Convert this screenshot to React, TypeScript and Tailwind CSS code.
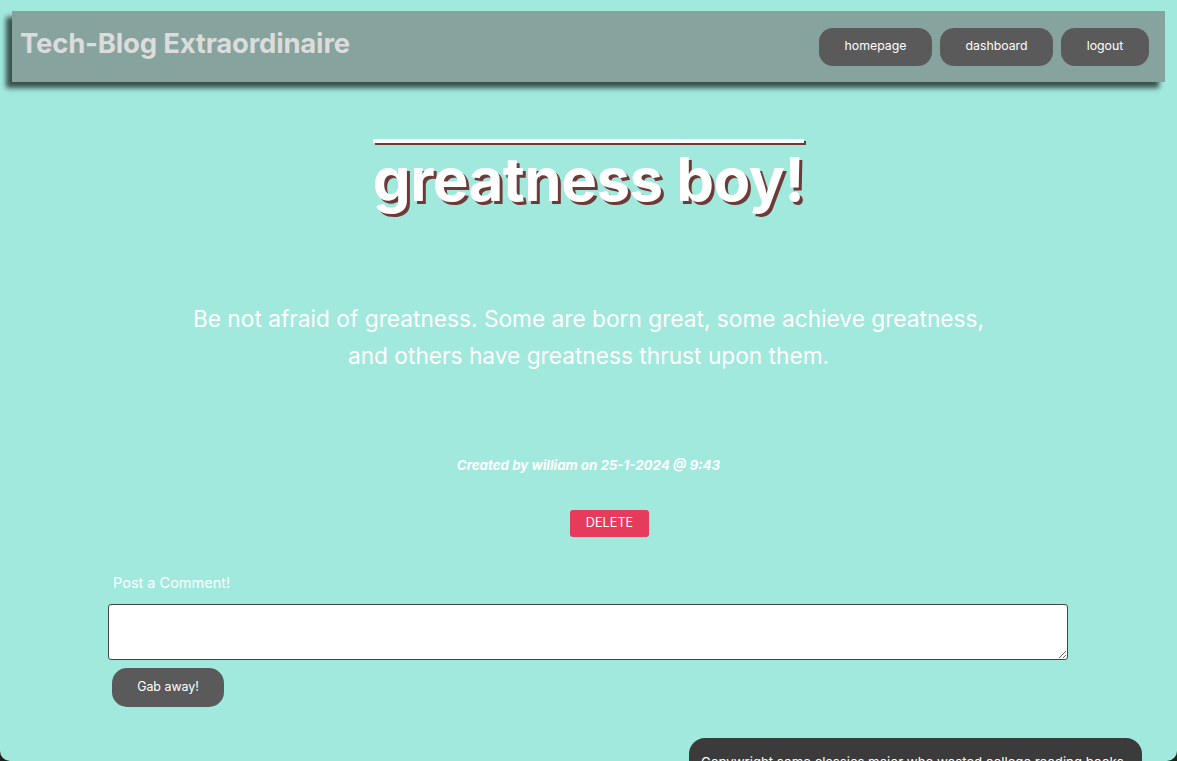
import React from "react";

export default function App() {
  const font = { fontFamily: "Inter, 'Noto Sans', sans-serif" };
  return (
    <div className="h-[761px] w-[1177px] bg-[#202020] overflow-hidden" style={font}>
      <div className="h-full w-full bg-[#a1e8dd] rounded-b-[10px] overflow-hidden flex flex-col">
        {/* Header */}
        <header className="shrink-0 mt-[11px] mx-[12px] h-[71px] bg-[#86a39d] shadow-[-6px_6px_5px_rgba(0,0,0,0.65)] flex items-center justify-between pl-[8px] pr-[16px]">
          <h1 className="text-[27.5px] font-bold text-[#dcdcdc] leading-none -mt-[5px] tracking-[-0.2px]">
            Tech-Blog Extraordinaire
          </h1>
          <nav className="flex gap-[7px]">
            <button className="w-[113px] h-[38px] rounded-[14px] bg-[#5a5a5a] text-white text-[12.3px]">homepage</button>
            <button className="w-[113px] h-[38px] rounded-[14px] bg-[#5a5a5a] text-white text-[12.3px] ml-[1px]">dashboard</button>
            <button className="w-[88px] h-[38px] rounded-[14px] bg-[#5a5a5a] text-white text-[12.3px] ml-[1px]">logout</button>
          </nav>
        </header>

        {/* Post */}
        <main className="shrink-0 flex flex-col items-center">
          <div className="mt-[57px] inline-flex flex-col">
            <div className="h-[4px] bg-white shadow-[2px_2px_0_#6e3a38]" />
            <h2 className="mt-[6px] text-[60px] font-bold text-white leading-[60px] tracking-[-0.5px] [text-shadow:3px_3px_0_#6e3a38]">
              greatness boy!
            </h2>
          </div>
          <p className="mt-[91px] max-w-[815px] text-center text-white text-[22.7px] leading-[37px]">
            Be not afraid of greatness. Some are born great, some achieve greatness, and others have greatness thrust upon them.
          </p>
          <p className="mt-[81px] text-white text-[13.3px] font-bold italic leading-[20px]">
            Created by william on 25-1-2024 @ 9:43
          </p>
          <button className="mt-[35px] ml-[42px] w-[79px] h-[27px] rounded-[3px] bg-[#e63b5a] text-white text-[12.7px] leading-none">
            DELETE
          </button>
        </main>

        {/* Comment form */}
        <section className="shrink-0 mt-[36px] w-[960px] ml-[108px] flex flex-col">
          <label className="pl-[5px] text-white text-[14.5px] leading-[20px]">Post a Comment!</label>
          <textarea className="mt-[11px] h-[56px] w-full bg-white border border-[#444] rounded-[3px]" />
          <button className="mt-[8px] ml-[4px] w-[112px] h-[39px] rounded-[15px] bg-[#5a5a5a] text-white text-[12.4px]">
            Gab away!
          </button>
        </section>

        {/* Footer */}
        <footer className="shrink-0 mt-[31px] flex justify-end pr-[35px]">
          <div className="w-[453px] h-[60px] rounded-t-[16px] bg-[#3b3b3b] px-[12px] pt-[14px] text-white text-[13.2px] leading-[20px] whitespace-nowrap">
            Copywright some classics major who wasted college reading books
          </div>
        </footer>
      </div>
    </div>
  );
}
